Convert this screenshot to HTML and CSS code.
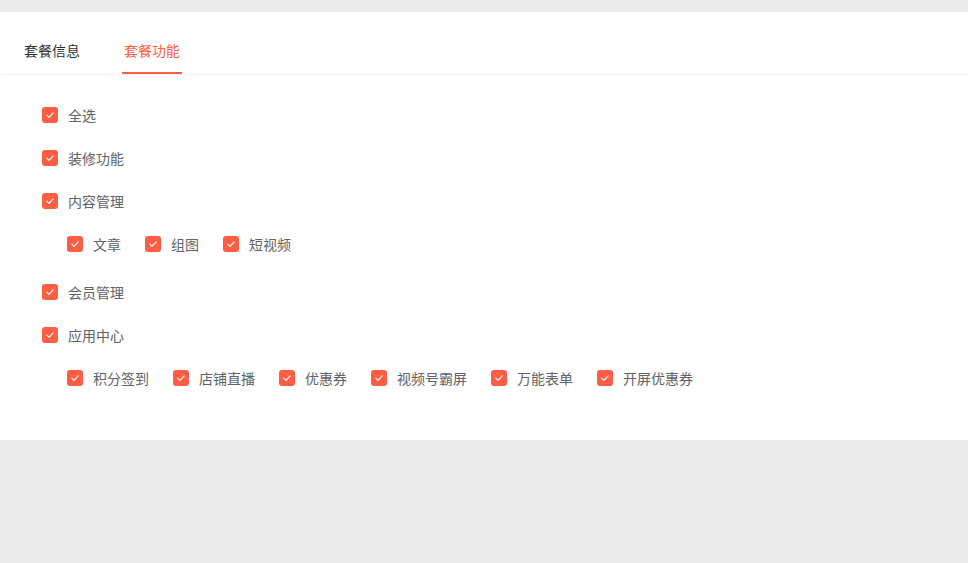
FILE: index.html
```html
<!DOCTYPE html>
<html lang="zh-CN">
<head>
<meta charset="utf-8">
<title>套餐功能</title>
<link rel="stylesheet" href="styles.css">
</head>
<body>
<div class="page">
  <div class="panel">
    <div class="tabs">
      <div class="tab">套餐信息</div>
      <div class="tab active">套餐功能</div>
    </div>
    <div class="content">
      <label class="cb"><span class="box"><svg viewBox="0 0 16 16"><polyline points="4.8,8.2 7,10.4 11.2,5.8"/></svg></span><span class="txt">全选</span></label>
      <label class="cb"><span class="box"><svg viewBox="0 0 16 16"><polyline points="4.8,8.2 7,10.4 11.2,5.8"/></svg></span><span class="txt">装修功能</span></label>
      <label class="cb"><span class="box"><svg viewBox="0 0 16 16"><polyline points="4.8,8.2 7,10.4 11.2,5.8"/></svg></span><span class="txt">内容管理</span></label>
      <div class="sub">
        <label class="cb"><span class="box"><svg viewBox="0 0 16 16"><polyline points="4.8,8.2 7,10.4 11.2,5.8"/></svg></span><span class="txt">文章</span></label>
        <label class="cb"><span class="box"><svg viewBox="0 0 16 16"><polyline points="4.8,8.2 7,10.4 11.2,5.8"/></svg></span><span class="txt">组图</span></label>
        <label class="cb"><span class="box"><svg viewBox="0 0 16 16"><polyline points="4.8,8.2 7,10.4 11.2,5.8"/></svg></span><span class="txt">短视频</span></label>
      </div>
      <label class="cb"><span class="box"><svg viewBox="0 0 16 16"><polyline points="4.8,8.2 7,10.4 11.2,5.8"/></svg></span><span class="txt">会员管理</span></label>
      <label class="cb"><span class="box"><svg viewBox="0 0 16 16"><polyline points="4.8,8.2 7,10.4 11.2,5.8"/></svg></span><span class="txt">应用中心</span></label>
      <div class="sub">
        <label class="cb"><span class="box"><svg viewBox="0 0 16 16"><polyline points="4.8,8.2 7,10.4 11.2,5.8"/></svg></span><span class="txt">积分签到</span></label>
        <label class="cb"><span class="box"><svg viewBox="0 0 16 16"><polyline points="4.8,8.2 7,10.4 11.2,5.8"/></svg></span><span class="txt">店铺直播</span></label>
        <label class="cb"><span class="box"><svg viewBox="0 0 16 16"><polyline points="4.8,8.2 7,10.4 11.2,5.8"/></svg></span><span class="txt">优惠券</span></label>
        <label class="cb"><span class="box"><svg viewBox="0 0 16 16"><polyline points="4.8,8.2 7,10.4 11.2,5.8"/></svg></span><span class="txt">视频号霸屏</span></label>
        <label class="cb"><span class="box"><svg viewBox="0 0 16 16"><polyline points="4.8,8.2 7,10.4 11.2,5.8"/></svg></span><span class="txt">万能表单</span></label>
        <label class="cb"><span class="box"><svg viewBox="0 0 16 16"><polyline points="4.8,8.2 7,10.4 11.2,5.8"/></svg></span><span class="txt">开屏优惠券</span></label>
      </div>
    </div>
  </div>
</div>
</body>
</html>
```
FILE: styles.css
```css
* { box-sizing: border-box; }
html, body {
  margin: 0;
  padding: 0;
  background: #ebebeb;
  font-family: "Noto Sans CJK SC", "Noto Sans", sans-serif;
  font-size: 14px;
}
.page {
  padding-top: 12px;
  height: 563px;
}
.panel {
  background: #ffffff;
  padding-bottom: 47px;
}
.tabs {
  display: flex;
  gap: 40px;
  padding: 20px 0 0 22px;
  margin-left: 2px;
  border-bottom: 1px solid #f0f0f0;
  height: 63px;
}
.tab {
  padding: 0 2px;
  height: 42px;
  line-height: 36px;
  color: #303133;
  border-bottom: 2px solid transparent;
}
.tab:first-child { margin-left: -2px; }
.tab.active {
  color: #ff5e45;
  border-bottom-color: #ff5e45;
}
.content {
  padding: 30px 0 0 42px;
  display: flex;
  flex-direction: column;
  align-items: flex-start;
  gap: 23px;
}
.cb {
  display: flex;
  align-items: center;
  height: 20px;
  cursor: pointer;
}
.box {
  width: 16px;
  height: 16px;
  border-radius: 3px;
  background: #ff5e45;
  display: flex;
}
.box svg {
  width: 16px;
  height: 16px;
  fill: none;
  stroke: #ffffff;
  stroke-width: 1.1;
  stroke-linecap: round;
  stroke-linejoin: round;
}
.txt {
  margin-left: 10px;
  color: #606266;
  line-height: 20px;
}
.sub {
  display: flex;
  gap: 24px;
  padding-left: 25px;
  margin-bottom: 5px;
}
```
